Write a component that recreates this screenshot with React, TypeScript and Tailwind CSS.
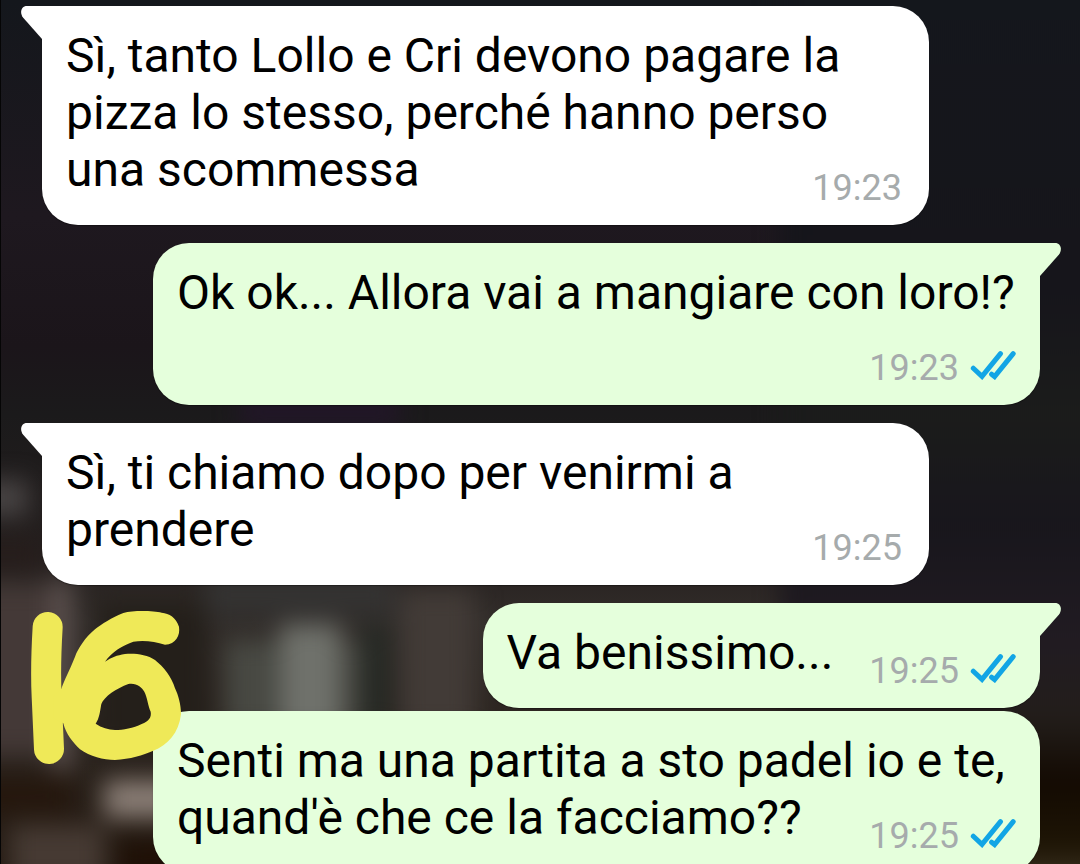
type Side = "in" | "out";

interface Message {
  id: number;
  side: Side;
  text: string;
  time: string;
  grouped?: boolean;
}

const messages: Message[] = [
  { id: 1, side: "in", text: "Sì, tanto Lollo e Cri devono pagare la pizza lo stesso, perché hanno perso una scommessa", time: "19:23" },
  { id: 2, side: "out", text: "Ok ok... Allora vai a mangiare con loro!?", time: "19:23" },
  { id: 3, side: "in", text: "Sì, ti chiamo dopo per venirmi a prendere", time: "19:25" },
  { id: 4, side: "out", text: "Va benissimo...", time: "19:25" },
  { id: 5, side: "out", text: "Senti ma una partita a sto padel io e te, quand'è che ce la facciamo??", time: "19:25", grouped: true },
];

function ReadTicks() {
  return (
    <svg viewBox="0 0 46 30" className="h-[30px] w-[46px]" fill="none" stroke="#12a5e5" strokeWidth="5" strokeLinecap="round" role="img" aria-label="Letto">
      <path d="M3.300 18.200 12 26.400 30.500 3.600" strokeLinejoin="miter" />
      <path d="M21.600 24.200 24.600 26.600 43.200 3.600" strokeLinejoin="miter" />
    </svg>
  );
}

function Tail({ side }: { side: Side }) {
  return (
    <svg
      viewBox="0 0 22 33"
      aria-hidden="true"
      className={
        side === "in"
          ? "absolute top-0 right-full h-[33px] w-[22px] fill-white"
          : "absolute top-0 left-full h-[33px] w-[22px] -scale-x-100 fill-[#e5ffdc]"
      }
    >
      <path d="M22 33 3 11.600C-0.500 6.500 1 0 7 0H22Z" />
    </svg>
  );
}

function Bubble({ message }: { message: Message }) {
  const { side, text, time, grouped } = message;
  const tone = side === "in" ? "self-start bg-white" : "self-end bg-[#e5ffdc]";
  const corner = grouped ? "rounded-[36px]" : side === "in" ? "rounded-[36px] rounded-tl-none" : "rounded-[36px] rounded-tr-none";
  const spacing = grouped ? "mt-[3px]" : "mt-[18px] first:mt-0";

  return (
    <li className={`relative w-fit max-w-[887px] px-6 pt-[21px] pb-2 shadow-[0_1px_1px_rgba(0,0,0,0.35)] ${tone} ${corner} ${spacing}`}>
      {!grouped && <Tail side={side} />}
      <p className="flow-root text-[48px] leading-[57px] text-black">
        {text}
        <span className="float-right mt-[19px] ml-9 flex h-[57px] items-center gap-[11px] text-[36px] text-[#a6abac]">
          <time className={side === "in" ? "pr-[3px]" : ""}>{time}</time>
          {side === "out" && (
            <span className="flex pb-2">
              <ReadTicks />
            </span>
          )}
        </span>
      </p>
    </li>
  );
}

function Wallpaper() {
  return (
    <svg viewBox="0 0 1080 864" preserveAspectRatio="xMidYMid slice" aria-hidden="true" className="absolute inset-0 h-full w-full">
      <defs>
        <linearGradient id="base" x1="0" y1="0" x2="0" y2="1">
          <stop offset="0" stopColor="#14171c" />
          <stop offset="0.25" stopColor="#1e181f" />
          <stop offset="0.4" stopColor="#1b151a" />
          <stop offset="0.48" stopColor="#1b1a1b" />
          <stop offset="0.64" stopColor="#251f1e" />
          <stop offset="0.72" stopColor="#322d2a" />
          <stop offset="1" stopColor="#241a12" />
        </linearGradient>
        <linearGradient id="edge" x1="0" y1="0" x2="0" y2="1">
          <stop offset="0" stopColor="#14171c" />
          <stop offset="0.35" stopColor="#16151b" />
          <stop offset="0.48" stopColor="#1b1c1b" />
          <stop offset="0.6" stopColor="#18161c" />
          <stop offset="0.72" stopColor="#211b22" />
          <stop offset="0.8" stopColor="#231e1b" />
          <stop offset="0.87" stopColor="#130a02" />
          <stop offset="0.94" stopColor="#1e1505" />
          <stop offset="1" stopColor="#544b3b" />
        </linearGradient>
        <filter id="soft" x="-10%" y="-10%" width="120%" height="120%" colorInterpolationFilters="sRGB">
          <feGaussianBlur stdDeviation="12" />
        </filter>
      </defs>
      <rect width="1080" height="864" fill="url(#base)" />
      <g filter="url(#soft)">
        <rect x="780" y="-40" width="360" height="944" fill="url(#edge)" />
        <rect x="240" y="400" width="160" height="24" fill="#23152b" />
        <rect x="-40" y="480" width="68" height="36" fill="#484444" />
        <rect x="-40" y="545" width="80" height="22" fill="#271d1b" />
        <rect x="-40" y="585" width="110" height="170" fill="#443937" />
        <rect x="52" y="580" width="20" height="190" fill="#5f5452" />
        <rect x="98" y="600" width="110" height="150" fill="#241f1a" />
        <rect x="-40" y="778" width="112" height="36" fill="#25170d" />
        <rect x="10" y="825" width="95" height="60" fill="#463a33" />
        <rect x="104" y="780" width="75" height="38" fill="#8a7e76" />
        <rect x="120" y="842" width="60" height="50" fill="#1f1006" />
        <rect x="205" y="575" width="190" height="40" fill="#343332" />
        <rect x="225" y="640" width="135" height="90" fill="#484943" />
        <rect x="280" y="624" width="60" height="110" fill="#6f716b" />
        <rect x="364" y="625" width="24" height="100" fill="#242924" />
        <rect x="400" y="590" width="75" height="140" fill="#423b37" />
      </g>
      <rect width="1" height="864" fill="#050505" />
    </svg>
  );
}

function Scribble() {
  return (
    <svg viewBox="90 90 456 465" role="img" aria-label="16" className="absolute top-[610px] left-[30px] h-[155px] w-[152px]" fill="#efe958">
      <path d="M143 141C137 240 138 310 140 350L147 507" fill="none" stroke="#efe958" strokeWidth="90" strokeLinecap="round" strokeLinejoin="round" />
      <path
        fillRule="evenodd"
        d="M495 194C528 192 541 166 537 140C528 112 508 100 485 98C460 92 400 90 370 99C335 113 305 132 285 148C255 173 235 205 225 230C207 275 195 295 184 326L160 350V415L190 430C198 463 217 485 240 508C270 530 310 540 345 540C390 538 430 525 458 513C505 494 536 460 543 402C543 375 535 345 525 325C515 290 490 260 465 240C440 222 400 219 375 222C350 226 335 232 315 245C335 215 370 195 400 185C430 180 465 184 495 194ZM385 312C410 308 425 322 433 335C442 352 444 378 452 395C455 412 446 424 425 432C400 445 370 450 345 450C325 449 305 443 287 431C298 415 300 395 304 372C312 350 350 325 385 312Z"
      />
    </svg>
  );
}

export default function App() {
  return (
    <main className="relative h-screen overflow-hidden bg-[#1b181b] font-['Roboto',sans-serif]">
      <Wallpaper />
      <ol className="relative flex flex-col pt-[6px] pr-10 pl-[42px]">
        {messages.map((message) => (
          <Bubble key={message.id} message={message} />
        ))}
      </ol>
      <Scribble />
    </main>
  );
}
